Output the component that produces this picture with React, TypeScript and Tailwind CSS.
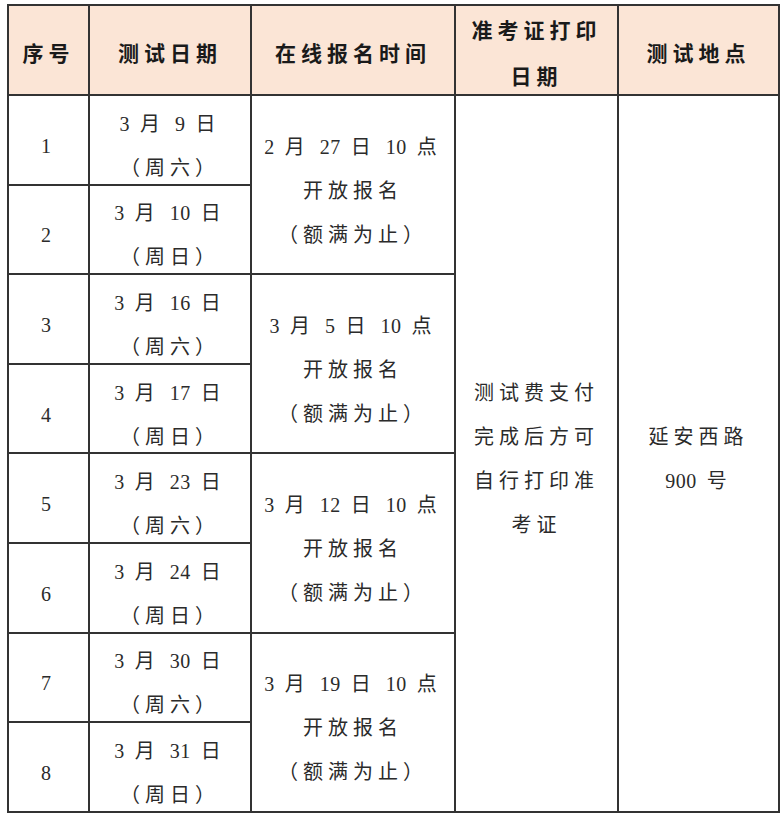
import { Fragment, type ReactNode } from "react"

const rows = [
  { no: "1", date: "3 月 9 日", week: "（周六）" },
  { no: "2", date: "3 月 10 日", week: "（周日）" },
  { no: "3", date: "3 月 16 日", week: "（周六）" },
  { no: "4", date: "3 月 17 日", week: "（周日）" },
  { no: "5", date: "3 月 23 日", week: "（周六）" },
  { no: "6", date: "3 月 24 日", week: "（周日）" },
  { no: "7", date: "3 月 30 日", week: "（周六）" },
  { no: "8", date: "3 月 31 日", week: "（周日）" },
]

const signup = ["2 月 27 日 10 点", "3 月 5 日 10 点", "3 月 12 日 10 点", "3 月 19 日 10 点"]

const cell = "border-2 border-[#333] text-center align-middle"
const head = `${cell} pt-[8px]`

// nudges text down a little without letting it stretch the row
function Inner({ children }: { children: ReactNode }) {
  return <div className="mt-[4px] -mb-[8px]">{children}</div>
}

// digits sit tight together, CJK glyphs get the wide spacing
function Txt({ s }: { s: string }) {
  const parts = s.split(/(\d+)/)
  return (
    <>
      {parts.map((p, i) =>
        /^\d+$/.test(p) ? (
          <span key={i} className="tracking-[0.5px]">
            {p}
          </span>
        ) : (
          <Fragment key={i}>{p}</Fragment>
        )
      )}
    </>
  )
}

export default function App() {
  return (
    <div
      className="min-h-screen bg-white pl-[7px] pt-[4px] text-[#2b2b2b]"
      style={{ fontFamily: '"Liberation Serif", "Noto Sans CJK SC", serif' }}
    >
      <table className="w-[771px] table-fixed border-collapse text-[20px] leading-[44px] tracking-[5px]">
        <colgroup>
          <col className="w-[81px]" />
          <col className="w-[162px]" />
          <col className="w-[204px]" />
          <col className="w-[163px]" />
          <col className="w-[161px]" />
        </colgroup>
        <thead>
          <tr className="h-[90px] bg-[#fbe5d6] text-[21px] font-bold text-[#1a1a1a]">
            <th className={head}>序号</th>
            <th className={head}>测试日期</th>
            <th className={head}>在线报名时间</th>
            <th className={cell}>
              <div className="-mb-[10px] -mt-[2px] leading-[46px]">
                准考证打印
                <br />
                日期
              </div>
            </th>
            <th className={head}>测试地点</th>
          </tr>
        </thead>
        <tbody>
          {rows.map((r, i) => (
            <tr key={r.no} className="h-[89.6px]">
              <td className={cell}>
                <Inner>{r.no}</Inner>
              </td>
              <td className={cell}>
                <Inner>
                  <Txt s={r.date} />
                  <br />
                  {r.week}
                </Inner>
              </td>
              {i % 2 === 0 && (
                <td className={cell} rowSpan={2}>
                  <Inner>
                    <Txt s={signup[i / 2]} />
                    <br />
                    开放报名
                    <br />
                    （额满为止）
                  </Inner>
                </td>
              )}
              {i === 0 && (
                <>
                  <td className={`${cell} px-3`} rowSpan={8}>
                    <Inner>测试费支付完成后方可自行打印准考证</Inner>
                  </td>
                  <td className={cell} rowSpan={8}>
                    <Inner>
                      延安西路
                      <br />
                      <Txt s="900 号" />
                    </Inner>
                  </td>
                </>
              )}
            </tr>
          ))}
        </tbody>
      </table>
    </div>
  )
}
